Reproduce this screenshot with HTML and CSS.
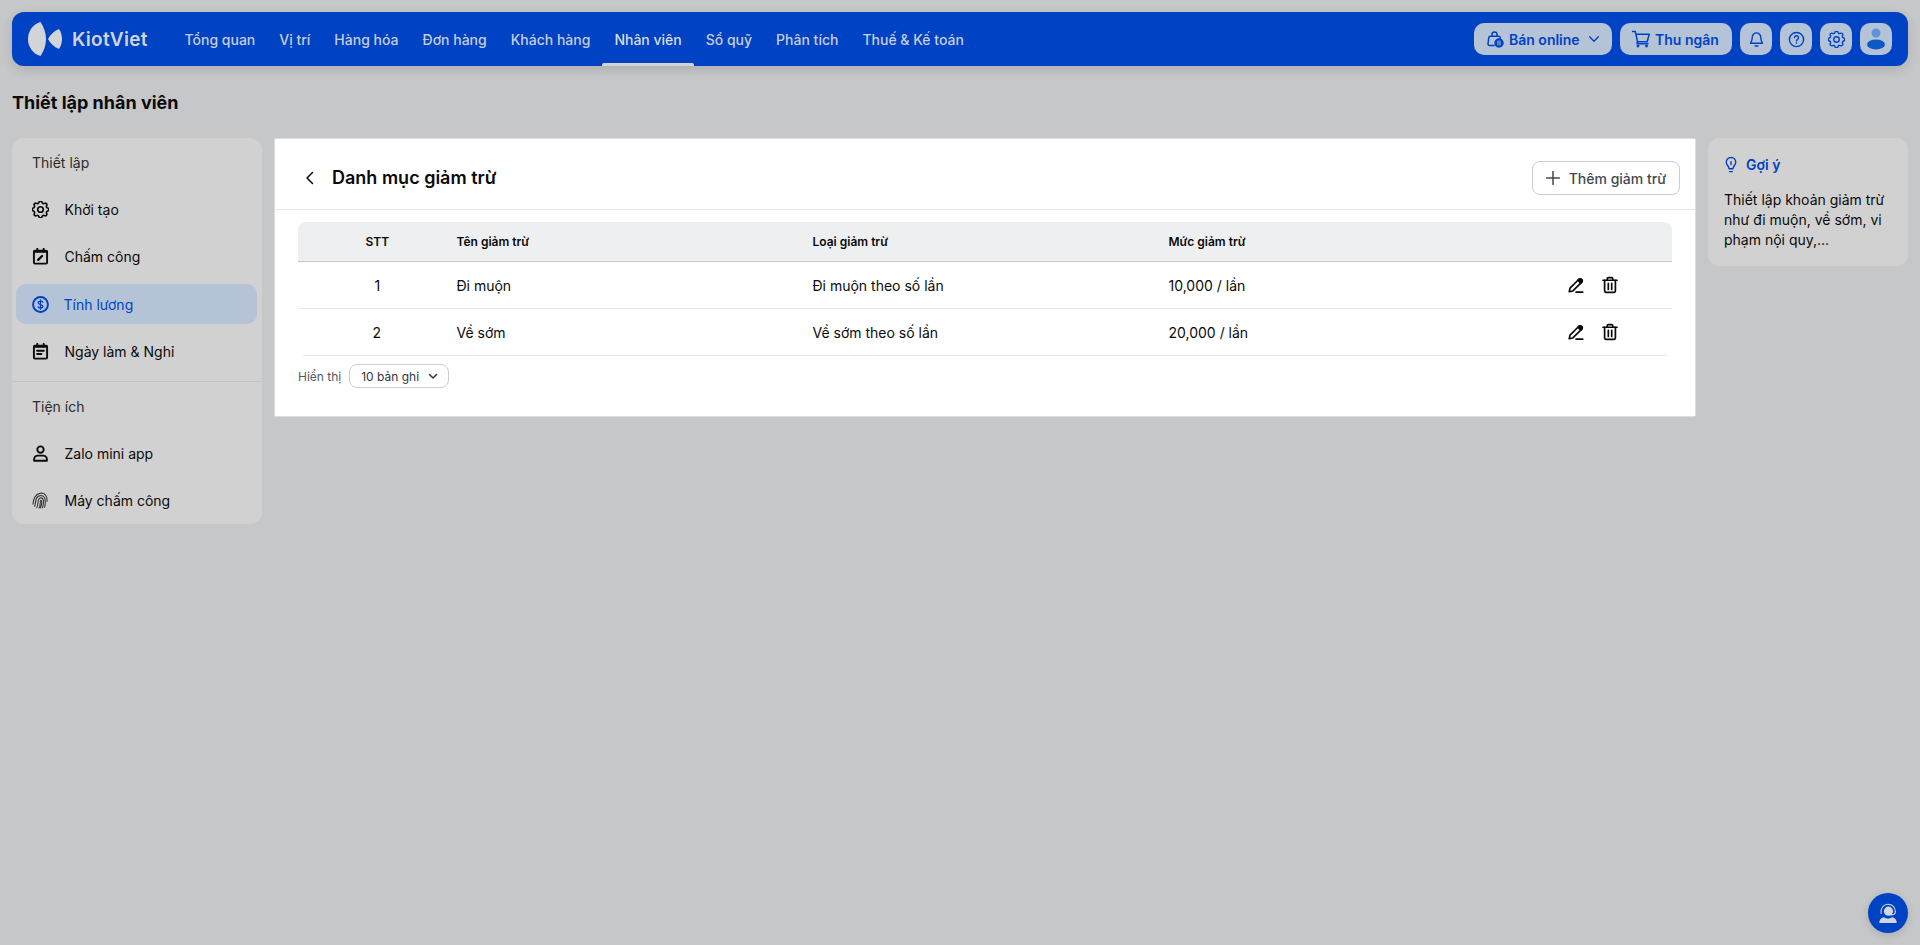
FILE: index.html
```html
<!DOCTYPE html>
<html lang="vi">
<head>
    <meta charset="UTF-8">
    <meta name="viewport" content="width=device-width, initial-scale=1.0">
    <title>Thiết lập nhân viên</title>
    <link rel="stylesheet" href="styles.css">
</head>
<body>
<svg class="sprites" width="0" height="0">
    <symbol id="gear" viewBox="2.8 2.800 18.400 18.400">
        <path d="M10.325 4.317c.426-1.756 2.924-1.756 3.35 0a1.724 1.724 0 0 0 2.573 1.066c1.543-.94 3.31.826 2.37 2.37a1.724 1.724 0 0 0 1.065 2.572c1.756.426 1.756 2.924 0 3.35a1.724 1.724 0 0 0-1.066 2.573c.94 1.543-.826 3.31-2.37 2.37a1.724 1.724 0 0 0-2.572 1.065c-.426 1.756-2.924 1.756-3.35 0a1.724 1.724 0 0 0-2.573-1.066c-1.543.94-3.31-.826-2.37-2.37a1.724 1.724 0 0 0-1.065-2.572c-1.756-.426-1.756-2.924 0-3.35a1.724 1.724 0 0 0 1.066-2.573c-.94-1.543.826-3.31 2.37-2.37c1 .608 2.296.07 2.572-1.065z"/>
        <circle cx="12" cy="12" r="3"/>
    </symbol>
    <symbol id="pen" viewBox="0 0 16 16">
        <path d="M2 14l.7-3.2L10.6 2.900a1.500 1.500 0 0 1 2.200 0l.3.3a1.500 1.500 0 0 1 0 2.200L5.200 13.300z"/>
        <path class="pen-tip" d="M10.600 2.900a1.500 1.500 0 0 1 2.200 0l.3.3a1.500 1.500 0 0 1 0 2.200l-.9.900-2.500-2.500z"/>
        <path d="M8 14.300h6"/>
    </symbol>
    <symbol id="bin" viewBox="0 0 16 16">
        <path d="M1.800 3.800h12.400"/>
        <path d="M3.200 3.800v9.400a1.300 1.300 0 0 0 1.300 1.300h7a1.300 1.300 0 0 0 1.300-1.300V3.800"/>
        <path d="M5.500 3.800V2.600a1.100 1.100 0 0 1 1.100-1.100h2.800a1.100 1.100 0 0 1 1.100 1.100v1.200"/>
        <path d="M6.500 6.500v5.500M9.500 6.500v5.500"/>
    </symbol>
</svg>

<header class="topbar">
    <a class="logo">
        <svg class="logo-mark" viewBox="0 0 34 34">
            <path d="M12.500 0C5 2 0 9 0 17s5 15 12.500 17c3.500-5 5.500-11 5.500-17S16 5 12.500 0z"/>
            <path d="M31 7c-5 2-9 6-11 10 2 4 6 8 11 10 2-3 3-6.500 3-10s-1-7-3-10z"/>
        </svg>
        <span class="logo-text">KiotViet</span>
    </a>
    <nav class="nav">
        <a class="nav-item">Tổng quan</a>
        <a class="nav-item">Vị trí</a>
        <a class="nav-item">Hàng hóa</a>
        <a class="nav-item">Đơn hàng</a>
        <a class="nav-item">Khách hàng</a>
        <a class="nav-item active">Nhân viên</a>
        <a class="nav-item">Sổ quỹ</a>
        <a class="nav-item">Phân tích</a>
        <a class="nav-item">Thuế &amp; Kế toán</a>
    </nav>
    <div class="top-actions">
        <button class="top-btn online">
            <svg class="line-icon" viewBox="0 0 18 18">
                <path d="M8 15.500H3.500a1.500 1.500 0 0 1-1.500-1.700l.8-6.300A1.500 1.500 0 0 1 4.300 6.200h8.400a1.500 1.500 0 0 1 1.500 1.300l.2 1.500"/>
                <path d="M6 6.200V4.500a2.500 2.500 0 0 1 5 0v1.700"/>
                <circle class="solid" cx="13" cy="13" r="4"/>
                <path class="cut" d="M12 11v4M14 11v4"/>
            </svg>
            Bán online
            <svg class="line-icon chevron" viewBox="0 0 16 16"><path d="M3 5.500l5 5 5-5"/></svg>
        </button>
        <button class="top-btn cashier">
            <svg class="line-icon" viewBox="0 0 18 18">
                <path d="M.5 1.500h2.800l2.200 10.200h9.700l2-7.500H3.900"/>
                <path d="M5.500 11.700l-.5 2h11"/>
                <circle cx="6" cy="16" r=".7"/>
                <circle cx="14.500" cy="16" r=".7"/>
            </svg>
            Thu ngân
        </button>
        <button class="top-btn square">
            <svg class="line-icon" viewBox="0 0 18 18">
                <path d="M9 2a4.500 4.500 0 0 0-4.500 4.500c0 4.500-1.800 6-1.800 6.500h12.600c0-.5-1.800-2-1.800-6.500A4.500 4.500 0 0 0 9 2z"/>
                <path d="M7.500 15.800h3"/>
            </svg>
        </button>
        <button class="top-btn square">
            <svg class="line-icon" viewBox="0 0 18 18">
                <circle cx="9" cy="9" r="7.500"/>
                <path d="M6.900 7a2.100 2.100 0 1 1 3.300 1.800c-.8.500-1.200 1-1.200 1.700"/>
                <path d="M9 12.700v.3"/>
            </svg>
        </button>
        <button class="top-btn square">
            <svg class="line-icon" viewBox="0 0 18 18"><use href="#gear"/></svg>
        </button>
        <button class="top-btn square">
            <svg class="avatar" viewBox="0 0 20 22">
                <circle cx="10" cy="5" r="4.500" fill="#5f93d8"/>
                <ellipse cx="10" cy="16.500" rx="9" ry="5" fill="#0b5bc6"/>
            </svg>
        </button>
    </div>
</header>

<h1 class="page-title">Thiết lập nhân viên</h1>

<div class="layout">
    <aside class="sidebar">
        <div class="side-group">
            <div class="side-label">Thiết lập</div>
            <a class="side-item">
                <svg class="side-icon" viewBox="0 0 16 16"><use href="#gear"/></svg>
                Khởi tạo
            </a>
            <a class="side-item">
                <svg class="side-icon" viewBox="0 0 16 16">
                    <rect x="1.800" y="2.500" width="12.400" height="12.200" rx="1"/>
                    <path d="M5 .8v3M11 .8v3M1.800 3.500h12.400"/>
                    <path class="thick" d="M5.800 11.200l3.700-3.700"/>
                </svg>
                Chấm công
            </a>
            <a class="side-item active">
                <svg class="side-icon" viewBox="0 0 16 16">
                    <circle cx="8" cy="8" r="7"/>
                    <path d="M10.200 5.800C9.800 5 9 4.800 8 4.800c-1.200 0-2.200.5-2.200 1.600 0 2.400 4.500 1 4.500 3.300 0 1-1 1.600-2.300 1.600-1 0-1.900-.3-2.300-1.100M8 3.700v8.700" stroke-width="1.200"/>
                </svg>
                Tính lương
            </a>
            <a class="side-item">
                <svg class="side-icon" viewBox="0 0 16 16">
                    <rect x="1.800" y="2.500" width="12.400" height="12.200" rx="1"/>
                    <path d="M5 .8v3M11 .8v3M1.800 3.500h12.400"/>
                    <path d="M4.800 7.300h6.400M4.800 10.300h4"/>
                </svg>
                Ngày làm &amp; Nghỉ
            </a>
        </div>
        <div class="side-group">
            <div class="side-label">Tiện ích</div>
            <a class="side-item">
                <svg class="side-icon" viewBox="0 0 16 16">
                    <circle cx="8" cy="4.300" r="3"/>
                    <path d="M2 14.800v-1.300a3.500 3.500 0 0 1 3.500-3.500h5a3.500 3.500 0 0 1 3.500 3.500v1.300z"/>
                </svg>
                Zalo mini app
            </a>
            <a class="side-item">
                <svg class="side-icon thin" viewBox="0 0 16 16">
                    <path d="M1 11.500C1.500 8 1.500 2.500 8.500 1c4.500 0 6 4 5.700 8"/>
                    <path d="M2.500 13.500C4 9 2.500 4 8.500 3.300c3.500 0 4.200 3.500 4 7.500-.1 1.300-.3 2.500-.7 3.500"/>
                    <path d="M4.500 14.800C6.500 11 4.500 5.800 8.500 5.500c2.300 0 2.500 3.300 2.200 5.500-.1 1.200-.4 2.500-.9 3.800"/>
                    <path d="M6.800 15C8.500 12 7 8.500 8.500 7.800c1.300.2.700 4-.5 7.200"/>
                </svg>
                Máy chấm công
            </a>
        </div>
    </aside>

    <main class="card">
        <div class="card-head">
            <svg class="back" viewBox="0 0 16 16"><path d="M10.500 2.500L5 8l5.500 5.500"/></svg>
            <h2 class="card-title">Danh mục giảm trừ</h2>
            <button class="add-btn">
                <svg class="plus" viewBox="0 0 14 14"><path d="M7 .5v13M.5 7h13"/></svg>
                Thêm giảm trừ
            </button>
        </div>
        <div class="card-body">
            <div class="row table-head">
                <div class="cell-stt">STT</div>
                <div class="cell-name">Tên giảm trừ</div>
                <div class="cell-type">Loại giảm trừ</div>
                <div class="cell-amount">Mức giảm trừ</div>
            </div>
            <div class="row">
                <div class="cell-stt">1</div>
                <div class="cell-name">Đi muộn</div>
                <div class="cell-type">Đi muộn theo số lần</div>
                <div class="cell-amount">10,000 / lần</div>
                <div class="cell-actions">
                    <svg class="act-icon" viewBox="0 0 16 16"><use href="#pen"/></svg>
                    <svg class="act-icon" viewBox="0 0 16 16"><use href="#bin"/></svg>
                </div>
            </div>
            <div class="row last">
                <div class="cell-stt">2</div>
                <div class="cell-name">Về sớm</div>
                <div class="cell-type">Về sớm theo số lần</div>
                <div class="cell-amount">20,000 / lần</div>
                <div class="cell-actions">
                    <svg class="act-icon" viewBox="0 0 16 16"><use href="#pen"/></svg>
                    <svg class="act-icon" viewBox="0 0 16 16"><use href="#bin"/></svg>
                </div>
            </div>
            <div class="pager">
                <span class="pager-label">Hiển thị</span>
                <div class="pager-select">
                    10 bản ghi
                    <svg class="pager-chevron" viewBox="0 0 12 12"><path d="M2.500 4.500L6 8l3.500-3.500"/></svg>
                </div>
            </div>
        </div>
    </main>

    <aside class="hint">
        <div class="hint-title">
            <svg class="hint-icon" viewBox="0 0 14 18">
                <path d="M7 1.500a5 5 0 0 0-5 5c0 2.500 1.700 3.500 2.500 5.500.3.800.3 1.200.5 1.500h4c.2-.3.200-.7.500-1.500C10.300 10 12 9 12 6.500a5 5 0 0 0-5-5z"/>
                <path d="M5.500 16.500h3M7 6v3"/>
            </svg>
            Gợi ý
        </div>
        <p class="hint-text">Thiết lập khoản giảm trừ như đi muộn, về sớm, vi phạm nội quy,...</p>
    </aside>
</div>

<button class="chat-btn">
    <svg viewBox="0 0 24 24" class="chat-icon">
        <path class="chat-line" d="M4.500 12.500C3.500 7 7 2.500 12 2.500s8 3.500 8 8"/>
        <circle cx="12.500" cy="10" r="5"/>
        <path class="chat-line" d="M20 10.500c0 2.500-2 3.500-5 3.500"/>
        <path d="M2.500 23c0-3.500 1.500-6 5-6.500 1.300 1 3 1.500 4.500 1.500s3.200-.5 4.500-1.500c3.500.5 5 3 5 6.500z"/>
    </svg>
</button>
</body>
</html>
```

FILE: styles.css
```css
* {
    box-sizing: border-box;
}

body {
    margin: 0;
    padding: 12px;
    min-height: 945px;
    background-color: #c6c7c9;
    font-family: Inter, "Noto Sans", sans-serif;
    font-size: 14px;
    color: #0a0a0a;
}

.sprites {
    position: absolute;
}

svg {
    display: block;
    flex-shrink: 0;
    fill: none;
    stroke: currentColor;
    stroke-width: 1.5;
    stroke-linecap: round;
    stroke-linejoin: round;
}

button {
    font-family: inherit;
    cursor: pointer;
}

/* top bar */
.topbar {
    display: flex;
    align-items: center;
    height: 54px;
    padding: 0 16px;
    background-color: #0042c4;
    border-radius: 12px;
    box-shadow: 0 4px 12px rgba(0, 0, 0, 0.12);
}

.logo {
    display: flex;
    align-items: center;
    gap: 10px;
    width: 144.500px;
    color: #d2d4d8;
}

.logo-mark {
    width: 34px;
    height: 34px;
    fill: currentColor;
    stroke: none;
}

.logo-text {
    font-size: 19px;
    font-weight: 600;
    letter-spacing: 0.3px;
}

.nav {
    display: flex;
    height: 54px;
    flex: 1;
}

.nav-item {
    position: relative;
    display: flex;
    align-items: center;
    padding: 0 12px;
    font-weight: 500;
    color: #c6cedb;
}

.nav-item.active {
    color: #d9dde3;
}

.nav-item.active::after {
    content: "";
    position: absolute;
    left: 0;
    right: 0;
    bottom: 0;
    height: 3px;
    background-color: #d2d4d8;
    border-radius: 2px 2px 0 0;
}

.top-actions {
    display: flex;
    gap: 8px;
}

.top-btn {
    display: flex;
    align-items: center;
    height: 32px;
    border: none;
    border-radius: 10px;
    background-color: #b5c3d6;
    color: #0042c4;
    font-size: 14px;
    font-weight: 600;
}

.top-btn.online {
    gap: 5px;
    width: 138px;
    padding: 0 0 0 12px;
}

.top-btn.cashier {
    gap: 5px;
    width: 112px;
    padding: 0 0 0 12px;
}

.top-btn.square {
    justify-content: center;
    width: 32px;
    padding: 0;
}

.line-icon {
    width: 18px;
    height: 18px;
}

.top-btn.square .line-icon {
    width: 17px;
    height: 17px;
}

.line-icon .solid {
    fill: currentColor;
}

.line-icon .cut {
    stroke: #b5c3d6;
    stroke-width: 1;
}

.line-icon.chevron {
    width: 14px;
    height: 14px;
    margin-left: 2px;
}

.avatar {
    width: 20px;
    height: 22px;
    stroke: none;
}

/* page */
.page-title {
    margin: 25px 0 0;
    font-size: 18px;
    line-height: 24px;
    font-weight: 700;
}

.layout {
    display: flex;
    align-items: flex-start;
    gap: 12px;
    margin-top: 23px;
}

/* left menu */
.sidebar {
    width: 250px;
    padding-bottom: 3.5px;
    background-color: #d1d1d1;
    border-radius: 12px;
}

.side-group {
    padding: 4px 5px 9.5px 4px;
}

.side-group + .side-group {
    border-top: 1px solid #c2c3c4;
    padding-bottom: 0;
}

.side-label {
    display: flex;
    align-items: center;
    height: 40px;
    margin-bottom: 7px;
    padding-left: 16px;
    color: #2b2b2b;
}

.side-item {
    display: flex;
    align-items: center;
    gap: 16px;
    height: 40px;
    padding-left: 16px;
}

.side-item + .side-item {
    margin-top: 7.5px;
}

.side-item.active {
    gap: 15px;
    background-color: #b5c3d6;
    border-radius: 10px;
    color: #0042c4;
}

.side-icon {
    width: 17px;
    height: 17px;
    margin-left: -0.5px;
    stroke-width: 1.8;
}

.side-icon .thick {
    stroke-width: 2.2;
}

.side-icon.thin {
    stroke-width: 1;
    opacity: 0.8;
}

/* main card */
.card {
    flex: 1;
    height: 279px;
    background-color: #fff;
    border: 1px solid #dcdde0;
    border-radius: 2px;
}

.card-head {
    display: flex;
    align-items: center;
    height: 71px;
    padding: 8px 15px 0 27px;
    border-bottom: 1px solid #e6e7ea;
}

.back {
    width: 16px;
    height: 16px;
}

.card-title {
    margin: 0 0 0 14px;
    font-size: 18px;
    font-weight: 600;
    line-height: 24px;
}

.add-btn {
    display: flex;
    align-items: center;
    gap: 9px;
    height: 34px;
    margin-left: auto;
    padding: 0 13px;
    background-color: #fff;
    border: 1px solid #c9ccd1;
    border-radius: 8px;
    color: #44474d;
    font-size: 14px;
    font-weight: 500;
}

.plus {
    width: 14px;
    height: 14px;
}

.card-body {
    padding: 12px 23px 0;
}

.row {
    display: grid;
    grid-template-columns: 158.5px 356px 356px 1fr 130px;
    align-items: center;
    height: 47px;
    border-bottom: 1px solid #e6e7ea;
}

.table-head {
    height: 40px;
    background-color: #eeeff1;
    border-bottom-color: #c6c8cd;
    border-radius: 8px 8px 0 0;
    font-size: 12px;
    font-weight: 600;
}

.row.last {
    margin: 0 5px;
    grid-template-columns: 153.5px 356px 356px 1fr 125px;
}

.cell-stt {
    text-align: center;
}

.row.last .cell-stt {
    padding-right: 6px;
}

.cell-actions {
    display: flex;
    justify-content: flex-end;
    gap: 16px;
    padding-right: 53px;
}

.row.last .cell-actions {
    padding-right: 48px;
}

.act-icon {
    width: 18px;
    height: 18px;
}

.pen-tip {
    fill: currentColor;
}

.pager {
    display: flex;
    align-items: center;
    gap: 8px;
    margin-top: 8px;
}

.pager-label {
    font-size: 12px;
    color: #55585e;
}

.pager-select {
    display: flex;
    align-items: center;
    justify-content: space-between;
    width: 100px;
    height: 24px;
    padding: 0 9px 0 11px;
    border: 1px solid #c9ccd1;
    border-radius: 8px;
    font-size: 12px;
    color: #33363b;
}

.pager-chevron {
    width: 12px;
    height: 12px;
}

/* hint */
.hint {
    width: 200px;
    height: 128px;
    padding: 16px;
    background-color: #d1d1d1;
    border-radius: 12px;
}

.hint-title {
    display: flex;
    align-items: center;
    gap: 8px;
    height: 20px;
    font-weight: 600;
    color: #0042c4;
}

.hint-icon {
    width: 14px;
    height: 17px;
}

.hint-text {
    margin: 16px 0 0;
    line-height: 20px;
}

/* floating support button */
.chat-btn {
    position: fixed;
    right: 12px;
    bottom: 12px;
    display: flex;
    align-items: center;
    justify-content: center;
    width: 40px;
    height: 40px;
    padding: 0;
    border: none;
    border-radius: 50%;
    background-color: #0042c4;
    color: #d2d6de;
    box-shadow: 0 2px 8px rgba(0, 0, 0, 0.15);
}

.chat-icon {
    width: 22px;
    height: 22px;
    fill: currentColor;
    stroke: none;
}

.chat-icon .chat-line {
    fill: none;
    stroke: currentColor;
    stroke-width: 1.2;
}
```
